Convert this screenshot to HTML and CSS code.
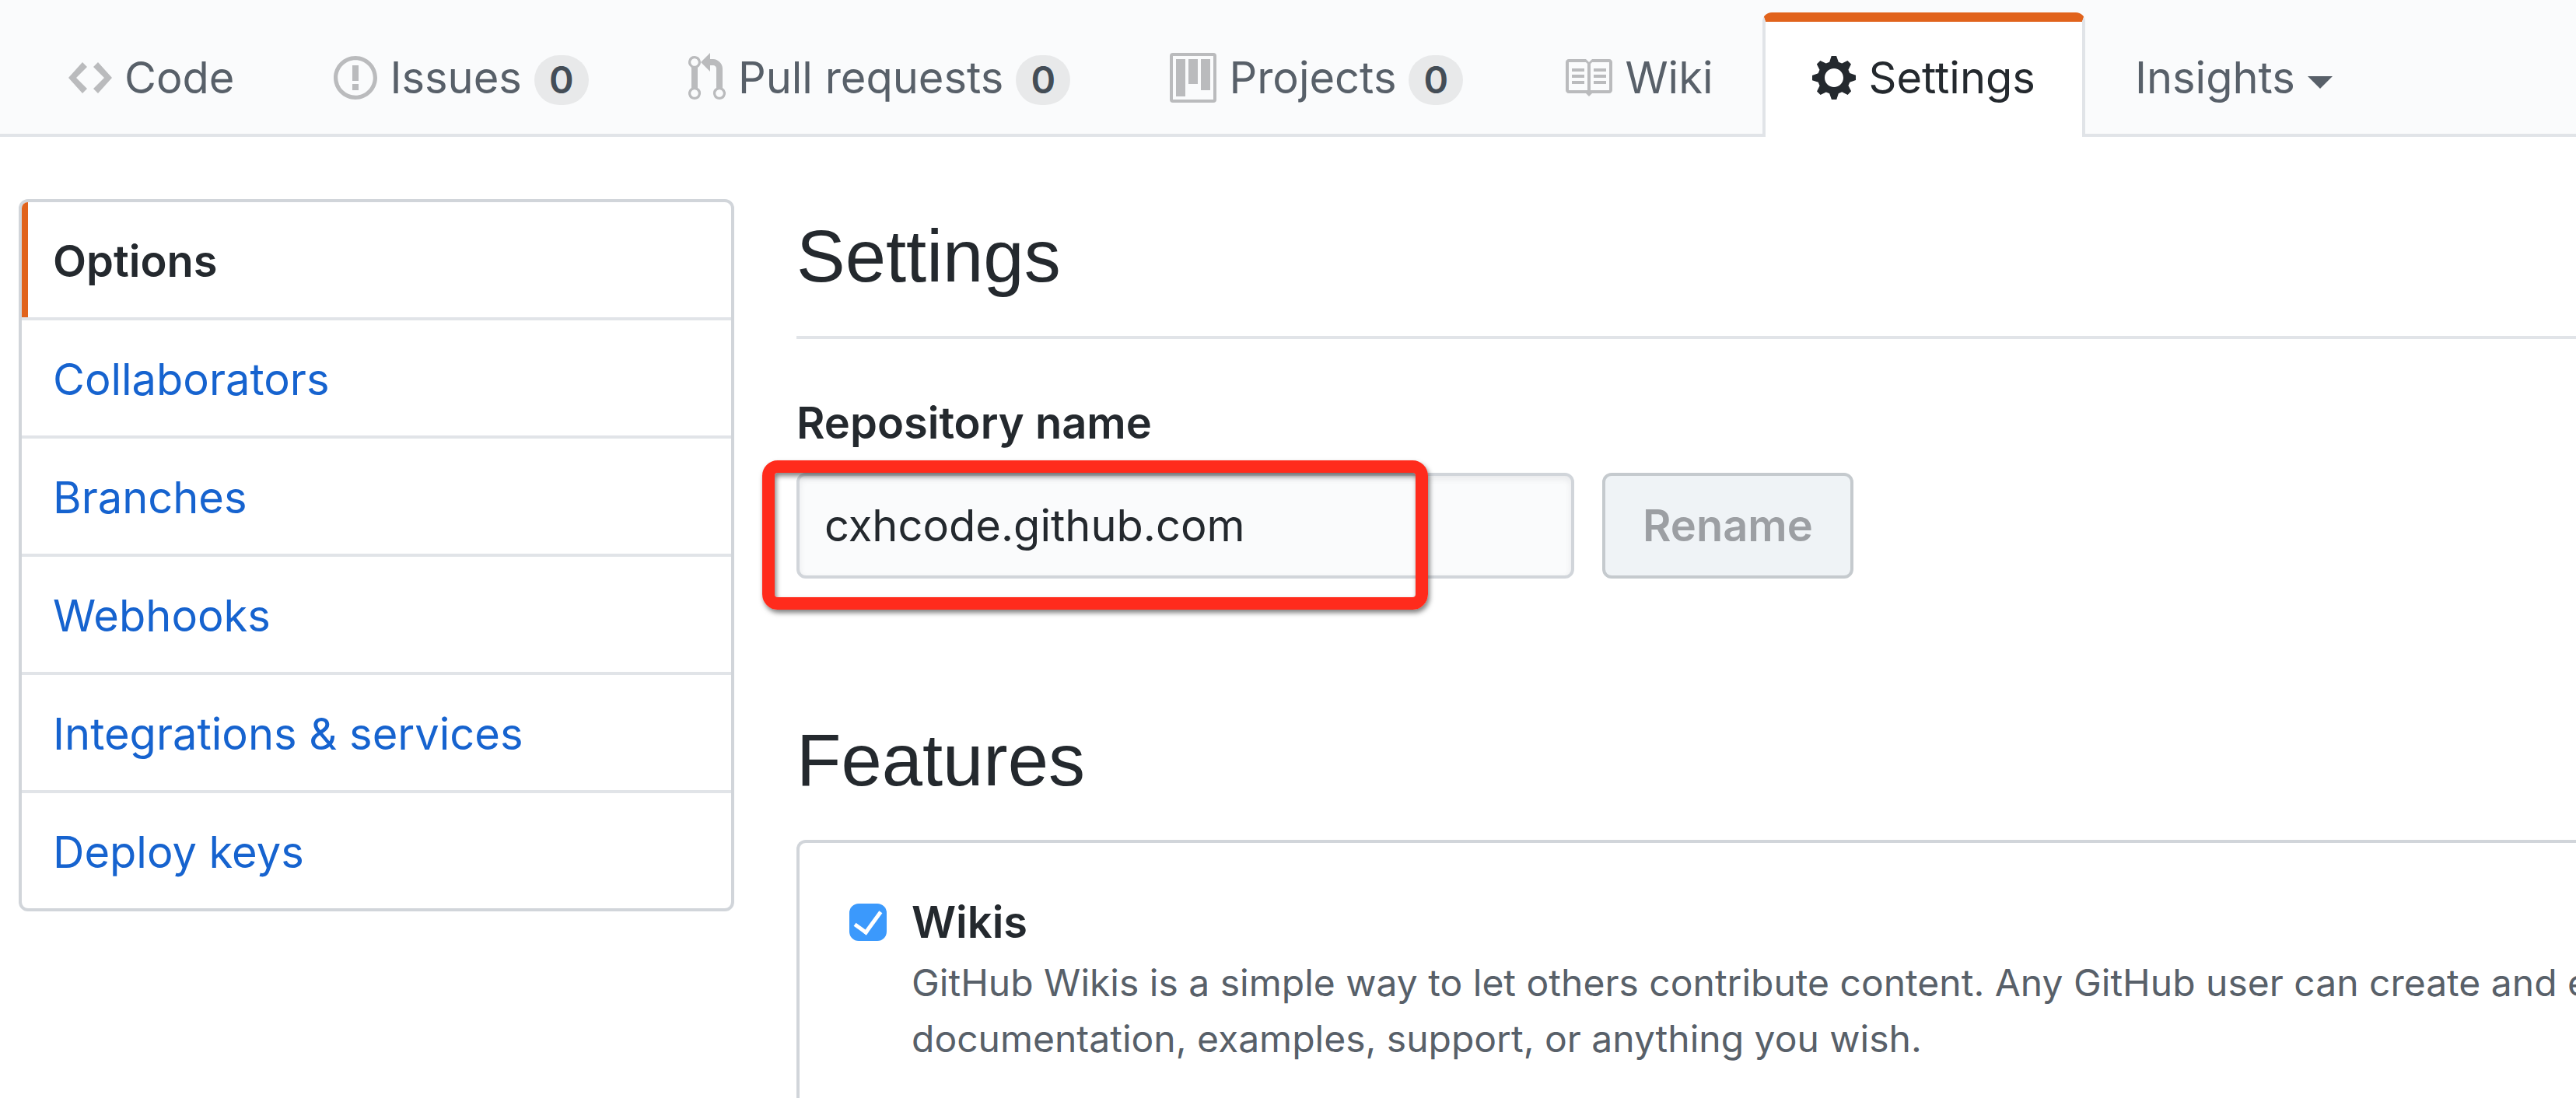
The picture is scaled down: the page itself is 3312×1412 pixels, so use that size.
FILE: index.html
```html
<!DOCTYPE html>
<html lang="en">
<head>
<meta charset="utf-8">
<title>Settings</title>
<link rel="stylesheet" href="styles.css">
</head>
<body>
<nav class="reponav" aria-label="Repository">
  <a class="tab" href="#code">
    <svg class="icon" width="56" height="64" viewBox="0 0 14 16" aria-hidden="true"><path d="M9.5 3L8 4.5 11.5 8 8 11.5 9.5 13 14 8 9.5 3zm-5 0L0 8l4.500 5L6 11.500 2.500 8 6 4.500 4.500 3z"/></svg>
    <span>Code</span>
  </a>
  <a class="tab" href="#issues">
    <svg class="icon" width="56" height="64" viewBox="0 0 14 16" aria-hidden="true"><path d="M7 2.300c3.140 0 5.700 2.560 5.700 5.700s-2.560 5.700-5.700 5.700A5.710 5.710 0 0 1 1.300 8c0-3.140 2.560-5.700 5.700-5.700zM7 1C3.140 1 0 4.140 0 8s3.140 7 7 7 7-3.140 7-7-3.140-7-7-7zm1 3H6v5h2V4zm0 6H6v2h2v-2z"/></svg>
    <span>Issues</span>
    <span class="counter">0</span>
  </a>
  <a class="tab" href="#pulls">
    <svg class="icon" width="48" height="64" viewBox="0 0 12 16" aria-hidden="true"><path d="M11 11.280V5c-.03-.78-.34-1.470-.94-2.060C9.460 2.350 8.780 2.030 8 2H7V0L4 3l3 3V4h1c.27.02.48.11.69.31.21.2.3.42.31.69v6.280A1.993 1.993 0 0 0 10 15a1.993 1.993 0 0 0 1-3.720zm-1 2.920c-.66 0-1.200-.55-1.200-1.200 0-.65.55-1.200 1.200-1.200.65 0 1.200.55 1.200 1.200 0 .65-.55 1.200-1.200 1.200zM4 3c0-1.110-.89-2-2-2a1.993 1.993 0 0 0-1 3.720v6.560A1.993 1.993 0 0 0 2 15a1.993 1.993 0 0 0 1-3.720V4.720c.59-.34 1-.98 1-1.720zm-.8 10c0 .66-.55 1.200-1.200 1.200-.65 0-1.200-.55-1.200-1.200 0-.65.55-1.200 1.200-1.200.65 0 1.200.55 1.200 1.200zM2 4.200C1.340 4.200.8 3.650.8 3c0-.65.55-1.200 1.200-1.200.65 0 1.200.55 1.200 1.200 0 .65-.55 1.200-1.200 1.200z"/></svg>
    <span>Pull requests</span>
    <span class="counter">0</span>
  </a>
  <a class="tab" href="#projects">
    <svg class="icon" width="60" height="64" viewBox="0 0 15 16" aria-hidden="true"><path fill-rule="evenodd" d="M10 12h3V2h-3v10zm-4-2h3V2H6v8zm-4 4h3V2H2v12zm-1 1h13V1H1v14zM14 0H1a1 1 0 0 0-1 1v14a1 1 0 0 0 1 1h13a1 1 0 0 0 1-1V1a1 1 0 0 0-1-1z"/></svg>
    <span>Projects</span>
    <span class="counter">0</span>
  </a>
  <a class="tab" href="#wiki">
    <svg class="icon" width="64" height="64" viewBox="0 0 16 16" aria-hidden="true"><path d="M3 5h4v1H3V5zm0 3h4V7H3v1zm0 2h4V9H3v1zm11-5h-4v1h4V5zm0 2h-4v1h4V7zm0 2h-4v1h4V9zm2-6v9c0 .55-.45 1-1 1H9.500l-1 1-1-1H2c-.55 0-1-.45-1-1V3c0-.55.45-1 1-1h5.500l1 1 1-1H15c.55 0 1 .45 1 1zm-8 .5L7.500 3H2v9h6V3.500zm7-.5H9.500l-.5.5V12h6V3z"/></svg>
    <span>Wiki</span>
  </a>
  <a class="tab selected" href="#settings" aria-current="page">
    <svg class="icon" width="56" height="64" viewBox="0 0 14 16" aria-hidden="true"><path d="M14 8.770v-1.600l-1.940-.64-.45-1.090.88-1.840-1.130-1.130-1.810.91-1.090-.45-.69-1.920h-1.600l-.63 1.940-1.110.45-1.840-.88-1.130 1.130.91 1.810-.45 1.090L0 7.230v1.590l1.940.64.45 1.090-.88 1.840 1.130 1.130 1.810-.91 1.090.45.69 1.920h1.590l.63-1.940 1.110-.45 1.840.88 1.130-1.130-.92-1.810.47-1.090L14 8.750v.02zM7 11c-1.660 0-3-1.340-3-3s1.340-3 3-3 3 1.340 3 3-1.340 3-3 3z"/></svg>
    <span>Settings</span>
  </a>
  <button class="tab" type="button" aria-haspopup="true">
    <span>Insights</span>
    <span class="caret"></span>
  </button>
</nav>

<div class="layout">
  <nav class="menu" aria-label="Settings">
    <a class="menu-item current" href="#options" aria-current="page">Options</a>
    <a class="menu-item" href="#collaborators">Collaborators</a>
    <a class="menu-item" href="#branches">Branches</a>
    <a class="menu-item" href="#webhooks">Webhooks</a>
    <a class="menu-item" href="#integrations">Integrations &amp; services</a>
    <a class="menu-item" href="#keys">Deploy keys</a>
  </nav>

  <main class="content">
    <h2 class="heading ruled">Settings</h2>
    <form class="rename">
      <label class="rename-label" for="repo-name">Repository name</label>
      <div class="rename-row">
        <input class="text-field" id="repo-name" type="text" value="cxhcode.github.com">
        <button class="button" type="submit" disabled>Rename</button>
        <span class="highlight"></span>
      </div>
    </form>

    <h2 class="heading">Features</h2>
    <section class="box">
      <div class="option">
        <input class="check" id="wikis" type="checkbox" checked aria-describedby="wikis-note">
        <div class="option-text">
          <label class="option-label" for="wikis">Wikis</label>
          <p class="note" id="wikis-note">GitHub Wikis is a simple way to let others contribute content. Any GitHub user can create and e<br>documentation, examples, support, or anything you wish.</p>
        </div>
      </div>
    </section>
  </main>
</div>
</body>
</html>
```

FILE: styles.css
```css
* {
  box-sizing: border-box;
}

body {
  display: flex;
  flex-direction: column;
  min-height: 100vh;
  margin: 0;
  overflow-x: hidden;
  background: #fff;
  color: #24292e;
  font: 56px/84px Inter, "Liberation Sans", sans-serif;
}

a {
  color: #1663cf;
  text-decoration: none;
}

/* Repository tabs */
.reponav {
  display: flex;
  padding: 16px 24px 0;
  border-bottom: 4px solid #e1e4e8;
  background: #fafbfc;
}

.tab {
  display: flex;
  align-items: center;
  gap: 16px;
  margin-bottom: -4px;
  padding: 30px 60px 34px;
  border: 4px solid transparent;
  border-top-width: 12px;
  border-bottom: 0;
  border-radius: 12px 12px 0 0;
  background: none;
  color: #586069;
  font: inherit;
  white-space: nowrap;
}

.tab.selected {
  border-color: #e1631c #e1e4e8 transparent;
  background: #fff;
  color: #24292e;
}

.icon {
  flex: none;
  fill: #babbbd;
}

.selected .icon {
  fill: currentColor;
}

.counter {
  min-width: 70px;
  height: 64px;
  margin-top: 6px;
  border-radius: 36px;
  background: #e8e9ea;
  color: #444d56;
  font-size: 48px;
  font-weight: 600;
  line-height: 64px;
  text-align: center;
}

.caret {
  margin-top: 12px;
  border: 16px solid transparent;
  border-top-color: currentColor;
  border-bottom: 0;
}

/* Page body */
.layout {
  display: flex;
  flex: 1;
  gap: 80px;
  padding: 80px 0 0 24px;
}

.menu {
  flex: none;
  align-self: flex-start;
  width: 920px;
  overflow: hidden;
  border: 4px solid #d1d5da;
  border-radius: 12px;
}

.menu-item {
  display: block;
  padding: 34px 40px 30px;
}

.menu-item + .menu-item {
  border-top: 4px solid #e1e4e8;
}

.menu-item.current {
  box-shadow: inset 8px 0 #e1631c;
  color: #24292e;
  font-weight: 600;
}

.content {
  display: flex;
  flex: 1;
  flex-direction: column;
  min-width: 0;
}

.heading {
  margin: 0 0 30px;
  padding-top: 2px;
  font-family: "Liberation Sans", sans-serif;
  font-size: 94px;
  font-weight: 400;
  line-height: 144px;
}

.ruled {
  margin-bottom: 66px;
  padding-bottom: 30px;
  border-bottom: 4px solid #e1e4e8;
}

.rename {
  margin-bottom: 160px;
}

.rename-label {
  display: block;
  margin-bottom: 22px;
  font-weight: 600;
}

.rename-row {
  position: relative;
  display: flex;
  gap: 36px;
}

.text-field {
  width: 1000px;
  height: 136px;
  padding: 0 32px;
  border: 4px solid #d1d5da;
  border-radius: 12px;
  background: #fafbfc;
  box-shadow: inset 0 4px 8px rgba(27, 31, 35, 0.08);
  color: #24292e;
  font: inherit;
}

.button {
  height: 136px;
  padding: 0 48px;
  border: 4px solid #c5cace;
  border-radius: 12px;
  background: #eff3f6;
  color: #9c9fa3;
  font: inherit;
  font-weight: 600;
}

.highlight {
  position: absolute;
  top: -16px;
  left: -44px;
  width: 856px;
  height: 192px;
  border: 16px solid #ff2b1c;
  border-radius: 20px;
  box-shadow: 2px 4px 6px rgba(0, 0, 0, 0.5), inset 2px 4px 6px rgba(0, 0, 0, 0.5);
  pointer-events: none;
}

/* Feature list */
.box {
  flex: 1;
  padding: 60px 0 60px 64px;
  border: 4px solid #d1d5da;
  border-width: 4px 0 0 4px;
  border-radius: 12px 0 0 0;
}

.option {
  display: flex;
  align-items: flex-start;
  gap: 32px;
}

.check {
  display: grid;
  flex: none;
  place-items: center;
  width: 48px;
  height: 48px;
  margin: 18px 0;
  border-radius: 12px;
  background: #3b99fc;
  appearance: none;
}

.check:checked::before {
  width: 15px;
  height: 30px;
  margin-bottom: 8px;
  border: solid #fff;
  border-width: 0 5px 5px 0;
  content: "";
  rotate: 36deg;
}

.option-label {
  font-weight: 600;
}

.note {
  margin: 0;
  color: #586069;
  font-size: 48px;
  line-height: 72px;
  white-space: nowrap;
}
```
